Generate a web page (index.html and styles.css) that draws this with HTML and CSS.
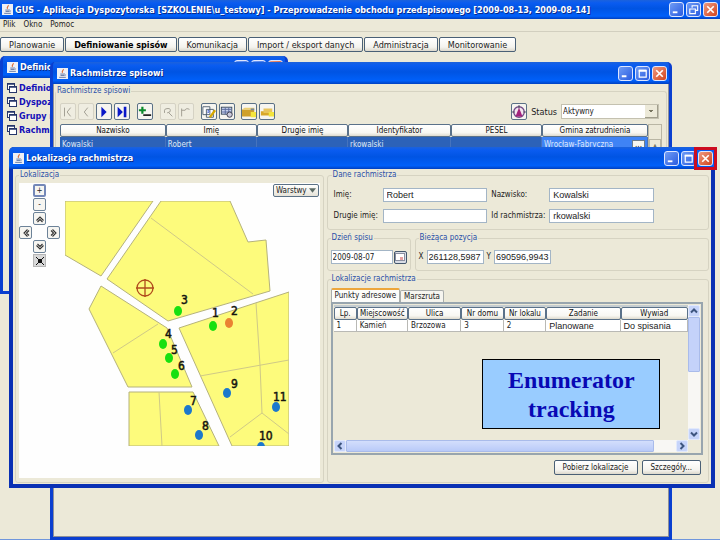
FILE: index.html
```html
<!DOCTYPE html>
<html lang="pl">

<head>
  <meta charset="UTF-8">
  <meta name="viewport" content="width=device-width, initial-scale=1.0">
  <title>GUS - Aplikacja Dyspozytorska</title>
  <link rel="stylesheet" href="styles.css">
</head>

<body>
  <svg class="sprite" aria-hidden="true">
    <symbol id="java" viewBox="0 0 10 10">
      <rect width="10" height="10" fill="#eef0f6" />
      <path d="M5.6 1c.8 1.2-1.8 1.8-.6 3.4" stroke="#d9662c" fill="none" />
      <path d="M3 5.5h4M3.2 6.8h3.4M2 8.5h6M7 5.5q1.4.6 0 1.6" stroke="#5a6f9c" fill="none" stroke-width=".8" />
    </symbol>
    <symbol id="min" viewBox="0 0 14 14"><path d="M3 10h5" stroke="#fff" stroke-width="2" /></symbol>
    <symbol id="max" viewBox="0 0 14 14"><path d="M3 3.5h8M3.5 3v8h7.500V3" stroke="#fff" fill="none" stroke-width="1.300" /><path d="M3 4h8" stroke="#fff" stroke-width="2" /></symbol>
    <symbol id="restore" viewBox="0 0 14 14"><path d="M5.500 5V3h6v5h-2M3 6.500h6v5H3z" stroke="#fff" fill="none" stroke-width="1.200" /></symbol>
    <symbol id="close" viewBox="0 0 14 14"><path d="M3.500 3.500l7 7M10.500 3.500l-7 7" stroke="#fff" stroke-width="1.800" /></symbol>
    <symbol id="form" viewBox="0 0 10 10">
      <rect x=".5" y=".5" width="7" height="6" fill="#fff" stroke="#26366b" />
      <rect x="2.500" y="3.500" width="7" height="6" fill="#fff" stroke="#26366b" />
      <path d="M0 1h8M2 4h8" stroke="#26366b" stroke-width="1.500" />
    </symbol>
    <symbol id="chevron" viewBox="0 0 10 10"><path d="M1.500 6.500L5 3l3.500 3.500M2.500 8L5 5.500 7.500 8" stroke="#333" fill="none" stroke-width="1.100" /></symbol>
    <symbol id="arrow" viewBox="0 0 10 10"><path d="M2 6.500l3-3 3 3" stroke="#3d557f" fill="none" stroke-width="2" /></symbol>
  </svg>

  <header class="titlebar app-title">
    <svg class="java"><use href="#java" /></svg>
    <h1>GUS - Aplikacja Dyspozytorska [SZKOLENIE\u_testowy] - Przeprowadzenie obchodu przedspisowego [2009-08-13, 2009-08-14]</h1>
    <button class="caption" aria-label="Minimalizuj"><svg><use href="#min" /></svg></button>
    <button class="caption" aria-label="Przywróć"><svg><use href="#restore" /></svg></button>
    <button class="caption close" aria-label="Zamknij"><svg><use href="#close" /></svg></button>
  </header>

  <nav class="menu">
    <a href="#">Plik</a>
    <a href="#">Okno</a>
    <a href="#">Pomoc</a>
  </nav>

  <div class="modules">
    <button class="btn">Planowanie</button>
    <button class="btn active">Definiowanie spisów</button>
    <button class="btn">Komunikacja</button>
    <button class="btn">Import / eksport danych</button>
    <button class="btn">Administracja</button>
    <button class="btn">Monitorowanie</button>
  </div>

  <main class="desktop">
    <section class="window win-menu">
      <div class="titlebar">
        <svg class="java"><use href="#java" /></svg>
        <h2>Definiowanie spisów</h2>
        <button class="caption" aria-label="Minimalizuj"><svg><use href="#min" /></svg></button>
        <button class="caption" aria-label="Maksymalizuj"><svg><use href="#max" /></svg></button>
        <button class="caption close" aria-label="Zamknij"><svg><use href="#close" /></svg></button>
      </div>
      <div class="window-body links">
        <a href="#"><svg><use href="#form" /></svg>Definiowanie</a>
        <a href="#"><svg><use href="#form" /></svg>Dyspozytorzy</a>
        <a href="#"><svg><use href="#form" /></svg>Grupy robocze</a>
        <a href="#"><svg><use href="#form" /></svg>Rachmistrze</a>
      </div>
    </section>

    <section class="window win-list">
      <div class="titlebar">
        <svg class="java"><use href="#java" /></svg>
        <h2>Rachmistrze spisowi</h2>
        <button class="caption" aria-label="Minimalizuj"><svg><use href="#min" /></svg></button>
        <button class="caption" aria-label="Maksymalizuj"><svg><use href="#max" /></svg></button>
        <button class="caption close" aria-label="Zamknij"><svg><use href="#close" /></svg></button>
      </div>
      <div class="window-body sunken">
        <fieldset class="list-group">
          <legend>Rachmistrze spisowi</legend>
          <div class="tools">
            <button class="tool off" aria-label="Pierwszy"><svg viewBox="0 0 16 16"><path d="M4 3v10M11 3L7 8l4 5" /></svg></button>
            <button class="tool off" aria-label="Poprzedni"><svg viewBox="0 0 16 16"><path d="M10 3L6 8l4 5" /></svg></button>
            <button class="tool nav" aria-label="Następny"><svg viewBox="0 0 16 16"><path d="M5 2l6 6-6 6z" /></svg></button>
            <button class="tool nav" aria-label="Ostatni"><svg viewBox="0 0 16 16"><path d="M3 2l6 6-6 6zM10 2h3v12h-3z" /></svg></button>
            <span class="space"></span>
            <button class="tool" aria-label="Dodaj"><svg viewBox="0 0 16 16"><path d="M5 2v8M1 6h8" stroke="#0a8a2a" stroke-width="2.500" /><path d="M6 11.500h9" stroke="#222" stroke-width="2" /></svg></button>
            <span class="space"></span>
            <button class="tool off" aria-label="Szukaj"><svg viewBox="0 0 16 16"><path d="M4 9V6q0-2 4-2t2 4l-3 1M9 9l4 4" /></svg></button>
            <button class="tool off" aria-label="Cofnij"><svg viewBox="0 0 16 16"><path d="M3 4v9M3 6h4q1-3 5-1" /></svg></button>
            <span class="space"></span>
            <button class="tool" aria-label="Edytuj"><svg viewBox="0 0 16 16"><path d="M1 2h8v9H1zM5 5h8v9H5z" fill="#fff" stroke="#456" /><path d="M9 14l6-8" stroke="#d6a800" stroke-width="2.500" /><path d="M6 7q2-2 2 0t-2 2" stroke="#24c" fill="none" /></svg></button>
            <button class="tool" aria-label="Raport"><svg viewBox="0 0 16 16"><rect x="1.500" y="2.500" width="12" height="8" fill="#c6d0ec" stroke="#345" /><path d="M2 5h11M2 8h11M6 3v8M10 3v8" stroke="#569" /><circle cx="11" cy="11" r="3" fill="#ccd" stroke="#334" /></svg></button>
            <span class="space thin"></span>
            <button class="tool" aria-label="Paczka"><svg viewBox="0 0 16 16"><path d="M0 5h14v8H0z" fill="#cfa02c" /><path d="M0 5l3-2h11v2z" fill="#edcf72" /><path d="M10 8h6v6h-6z" fill="#f4e53c" /><path d="M10 4h4v2h-4z" fill="#789" /></svg></button>
            <button class="tool" aria-label="Wyślij"><svg viewBox="0 0 16 16"><path d="M1 7h10v5H1z" fill="#d9a828" /><path d="M4 4h10v5H4z" fill="#e8c45c" /><path d="M10 8h6v5h-6z" fill="#f4e53c" /></svg></button>
            <span class="fill"></span>
            <button class="tool" aria-label="Lokalizacja"><svg viewBox="0 0 16 16"><circle cx="8" cy="8" r="6" fill="#f3e6ef" stroke="#704a86" stroke-width="1.500" /><path d="M8 0v4M0 8h3M13 8h3" stroke="#445" /><path d="M8 3l2 5 2 5H4l2-5z" fill="#a4237c" /></svg></button>
            <label for="status">Status</label>
            <select id="status">
              <option>Aktywny</option>
            </select>
          </div>
          <div class="people-wrap">
            <table class="grid people">
              <colgroup><col class="p-last"><col class="p-name"><col class="p-name"><col class="p-id"><col class="p-name"><col></colgroup>
              <thead>
                <tr><th>Nazwisko</th><th>Imię</th><th>Drugie imię</th><th>Identyfikator</th><th>PESEL</th><th>Gmina zatrudnienia</th></tr>
              </thead>
              <tbody>
                <tr><td>Kowalski</td><td>Robert</td><td></td><td>rkowalski</td><td></td><td class="focus">Wrocław-Fabryczna<button aria-label="Wybierz">...</button></td></tr>
              </tbody>
            </table>
            <div class="gutter"><button class="gray-arrow" aria-label="W górę">▲</button></div>
          </div>
        </fieldset>
      </div>
    </section>

    <section class="window win-map">
      <div class="titlebar">
        <svg class="java"><use href="#java" /></svg>
        <h2>Lokalizacja rachmistrza</h2>
        <button class="caption" aria-label="Minimalizuj"><svg><use href="#min" /></svg></button>
        <button class="caption" aria-label="Maksymalizuj"><svg><use href="#max" /></svg></button>
        <button class="caption close marked" aria-label="Zamknij"><svg><use href="#close" /></svg></button>
      </div>
      <div class="window-body split">
        <fieldset class="map-group">
          <legend>Lokalizacja</legend>
          <div class="canvas">
            <div class="pan">
              <button class="zoom-in" aria-label="Powiększ">+</button>
              <button class="zoom-out" aria-label="Pomniejsz">-</button>
              <button class="up" aria-label="W górę"><svg><use href="#chevron" /></svg></button>
              <button class="left" aria-label="W lewo"><svg><use href="#chevron" /></svg></button>
              <button class="right" aria-label="W prawo"><svg><use href="#chevron" /></svg></button>
              <button class="down" aria-label="W dół"><svg><use href="#chevron" /></svg></button>
              <button class="fit" aria-label="Dopasuj"><svg viewBox="0 0 10 10"><path d="M3 3h4v4H3z" fill="#111" /><path d="M1 1l8 8M9 1L1 9" stroke="#111" /></svg></button>
            </div>
            <svg class="map" viewBox="65 201 224 245">
              <g class="land">
                <path d="M65 201h88L101 276 65 255z" />
                <path d="M161 201h69l18 41 18-2 4 51-102 30-61-42z" />
                <path d="M101 286l66 42 25 59h-64L89 309z" />
                <path d="M179 328l110-36v154h-57z" />
                <path d="M129 392h64l26 54h-90z" />
              </g>
              <g class="parcel">
                <path d="M151 218l102 76M113 353l45-29M256 303l4 62 2 48 27 21M262 413l-32 24M200 376l89-16M159 392l3 54" />
              </g>
              <g class="cross">
                <circle cx="145" cy="288" r="8" />
                <path d="M145 279v18M136 288h18" />
              </g>
              <g class="done">
                <ellipse cx="178" cy="311" rx="4" ry="5" />
                <ellipse cx="213" cy="326" rx="4" ry="5" />
                <ellipse cx="163" cy="344" rx="4" ry="5" />
                <ellipse cx="169" cy="358" rx="4" ry="5" />
                <ellipse cx="175" cy="374" rx="4" ry="5" />
              </g>
              <ellipse class="current" cx="229" cy="323" rx="4" ry="5" />
              <g class="todo">
                <ellipse cx="188" cy="410" rx="4" ry="5" />
                <ellipse cx="199" cy="435" rx="4" ry="5" />
                <ellipse cx="227" cy="393" rx="4" ry="5" />
                <ellipse cx="276" cy="407" rx="4" ry="5" />
                <ellipse cx="261" cy="447" rx="4" ry="5" />
              </g>
              <g class="numbers">
                <text x="181" y="304">3</text>
                <text x="212" y="317">1</text>
                <text x="231" y="315">2</text>
                <text x="165" y="338">4</text>
                <text x="171" y="354">5</text>
                <text x="178" y="370">6</text>
                <text x="190" y="405">7</text>
                <text x="202" y="430">8</text>
                <text x="231" y="388">9</text>
                <text x="273" y="401">11</text>
                <text x="259" y="440">10</text>
              </g>
            </svg>
            <button class="layers">Warstwy <svg viewBox="0 0 8 5"><path d="M0 0h8L4 5z" fill="#5c6b66" /></svg></button>
          </div>
        </fieldset>

        <div class="details">
          <fieldset>
            <legend>Dane rachmistrza</legend>
            <div class="person">
              <label for="imie">Imię:</label><input id="imie" value="Robert">
              <label for="nazwisko">Nazwisko:</label><input id="nazwisko" value="Kowalski">
              <label for="drugie">Drugie imię:</label><input id="drugie" value="">
              <label for="idr">Id rachmistrza:</label><input id="idr" value="rkowalski">
            </div>
          </fieldset>
          <div class="pair">
            <fieldset class="day">
              <legend>Dzień spisu</legend>
              <div class="row">
                <input class="date" aria-label="Dzień spisu" value="2009-08-07">
                <button class="calendar" aria-label="Kalendarz"><svg viewBox="0 0 10 8"><rect x=".5" y=".5" width="9" height="7" fill="#fff" stroke="#8a8fa0" /><path d="M5 4h3v3H5z" fill="#e7a0a0" /></svg></button>
              </div>
            </fieldset>
            <fieldset class="position">
              <legend>Bieżąca pozycja</legend>
              <div class="row">
                <label for="px">X</label><input id="px" value="261128,5987">
                <label for="py">Y</label><input id="py" value="690596,9943">
              </div>
            </fieldset>
          </div>
          <fieldset class="places">
            <legend>Lokalizacje rachmistrza</legend>
            <div class="tabs">
              <button class="tab selected">Punkty adresowe</button>
              <button class="tab">Marszruta</button>
            </div>
            <div class="scrollpane">
              <div class="view">
                <table class="grid points">
                  <colgroup><col class="c-lp"><col class="c-town"><col class="c-street"><col class="c-house"><col class="c-house"><col class="c-task"><col></colgroup>
                  <thead>
                    <tr><th>Lp.</th><th>Miejscowość</th><th>Ulica</th><th>Nr domu</th><th>Nr lokalu</th><th>Zadanie</th><th>Wywiad</th></tr>
                  </thead>
                  <tbody>
                    <tr><td>1</td><td>Kamień</td><td>Brzozowa</td><td>3</td><td>2</td><td class="big">Planowane</td><td class="big">Do spisania</td></tr>
                  </tbody>
                </table>
              </div>
              <div class="vbar">
                <button aria-label="W górę"><svg><use href="#arrow" /></svg></button>
                <span class="thumb"></span>
                <button class="down" aria-label="W dół"><svg><use href="#arrow" /></svg></button>
              </div>
              <div class="hbar">
                <button class="left" aria-label="W lewo"><svg><use href="#arrow" /></svg></button>
                <span class="thumb"></span>
                <button class="right" aria-label="W prawo"><svg><use href="#arrow" /></svg></button>
              </div>
            </div>
            <div class="actions">
              <button class="btn">Pobierz lokalizacje</button>
              <button class="btn">Szczegóły...</button>
            </div>
          </fieldset>
        </div>
      </div>
    </section>

    <aside class="callout">Enumerator tracking</aside>
  </main>
</body>

</html>
```

FILE: styles.css
```css
* {
  box-sizing: border-box;
}

body {
  margin: 0;
  height: 100vh;
  display: flex;
  flex-direction: column;
  overflow: hidden;
  background: #ece9d8;
  color: #222;
  font: 8px/10px "DejaVu Sans Condensed", "DejaVu Sans", sans-serif;
}

button,
input,
select {
  margin: 0;
  padding: 0;
  font: inherit;
  color: inherit;
}

button svg {
  display: block;
}

a {
  color: inherit;
  text-decoration: none;
}

.sprite {
  display: none;
}

/* title bars */
.titlebar {
  display: flex;
  align-items: center;
  gap: 2px;
  height: 22px;
  padding: 0 2px 0 4px;
  flex: none;
  color: #fff;
  background: linear-gradient(#1c62dc, #0a5cf0 15%, #0054e3 45%, #0060fa 85%, #0040c0);
}

.titlebar h1,
.titlebar h2 {
  flex: 1;
  min-width: 0;
  overflow: hidden;
  margin: 0;
  font-size: 9px;
  line-height: 14px;
  white-space: nowrap;
  text-shadow: 1px 1px #0a2a8a;
}

.app-title {
  height: 19px;
  padding: 0 2px;
}

.java {
  width: 11px;
  height: 11px;
  flex: none;
}

.caption {
  position: relative;
  width: 15px;
  height: 15px;
  flex: none;
  border: 1px solid #dde6ff;
  border-radius: 3px;
  background: linear-gradient(135deg, #6f9cf5, #2a5ce0);
}

.caption svg {
  width: 13px;
  height: 13px;
}

.caption.close {
  background: linear-gradient(135deg, #ee9a80, #d2431c);
}

/* red frame around the close button */
.caption.marked::after {
  content: "";
  position: absolute;
  inset: -5px;
  border: 3px solid #cc0c20;
}

/* main menu and module buttons */
.menu {
  display: flex;
  gap: 8px;
  height: 13px;
  padding: 1px 3px;
  border-bottom: 1px solid #d2cfbf;
}

.modules {
  display: flex;
  gap: 1px;
  padding: 5px 0 3px;
}

.btn {
  height: 15px;
  padding: 0 8px;
  border: 1px solid #4a6076;
  border-radius: 2px;
  background: linear-gradient(#fff, #f4f3ee 70%, #dcd8cc);
  line-height: 12px;
  white-space: nowrap;
}

.modules .btn {
  font-size: 9px;
}

.modules .active {
  font-weight: bold;
  color: #000;
}

/* desktop with free windows */
.desktop {
  position: relative;
  flex: 1;
  border-bottom: 1px solid #6f96dc;
}

.window {
  position: absolute;
  display: flex;
  flex-direction: column;
  border: 3px solid #0a3fd0;
  border-top: 0;
  border-radius: 5px 5px 0 0;
  background: #0a3fd0;
  overflow: hidden;
}

.window-body {
  flex: 1;
  min-height: 0;
  background: #ece9d8;
}

.win-menu {
  top: 1px;
  left: 0;
  width: 40%;
  height: 238px;
}

.win-list {
  top: 7px;
  left: 50px;
  right: 48px;
  bottom: -1px;
}

.win-map {
  top: 92px;
  left: 9px;
  right: 5px;
  bottom: 51px;
  border: 4px solid #0930b4;
  border-top: 0;
  overflow: visible;
}

.win-map .titlebar {
  margin: 0 -4px;
  border-radius: 5px 5px 0 0;
}

.links {
  padding: 3px 4px;
}

.links a {
  display: flex;
  align-items: center;
  gap: 2px;
  height: 14px;
  font-size: 9px;
  font-weight: bold;
  color: #1410b8;
}

.links svg {
  width: 10px;
  height: 10px;
}

/* groups */
fieldset {
  margin: 0;
  min-width: 0;
  padding: 4px;
  border: 1px solid #d6d3c2;
  border-radius: 3px;
}

legend {
  height: 8px;
  padding: 0 1px;
  line-height: 8px;
  color: #2a50a8;
}

.sunken {
  padding: 3px 1px;
  border: 1px solid #8e9099;
  border-top: 0;
}

.list-group {
  border-bottom: 0;
}

.list-group legend {
  margin-left: -4px;
}

/* list window */
.tools {
  display: flex;
  align-items: center;
  gap: 2px;
  padding: 4px 3px 4px 0;
}

.tool {
  width: 16px;
  height: 17px;
  border: 1px solid #5b7186;
  border-radius: 2px;
  background: #f6f5f0;
}

.tool svg {
  width: 14px;
  height: 14px;
  fill: none;
}

.tool.off {
  border-color: #d5d2c4;
  background: #efede1;
}

.tool.off svg {
  stroke: #99968a;
}

.tool.nav svg {
  fill: #0a18c8;
}

.space {
  width: 3px;
}

.space.thin {
  width: 2px;
}

.fill {
  flex: 1;
}

.tools label {
  padding: 0 2px;
  font-size: 9px;
}

.tools select {
  width: 98px;
  height: 15px;
  padding: 0 1px;
  appearance: none;
  border: 1px solid #c4c1b0;
  border-radius: 0;
  background-color: #fff;
  background-image:
    conic-gradient(from -45deg at 50% 100%, #77745f 90deg, transparent 0),
    linear-gradient(#ece9d8, #ece9d8),
    linear-gradient(#a19e8c, #a19e8c);
  background-position: right 4px center, right 1px top 0, right 0 top 0;
  background-size: 6px 3px, 12px 12px, 13px 13px;
  background-repeat: no-repeat;
}

.people-wrap {
  display: flex;
}

.grid {
  flex: 1;
  width: 100%;
  table-layout: fixed;
  border-collapse: separate;
  border-spacing: 0;
}

.grid th {
  height: 13px;
  padding: 0;
  border: 1px solid #5a7189;
  border-radius: 2px;
  background: linear-gradient(#fff, #f8f7f2 70%, #dedacd);
  font-weight: normal;
  line-height: 10px;
  color: #111;
  white-space: nowrap;
}

.grid td {
  height: 12px;
  padding: 0 2px;
  line-height: 10px;
  white-space: nowrap;
}

.p-last { width: 18%; }
.p-name { width: 15.5%; }
.p-id { width: 17.5%; }

.people td {
  border-right: 1px solid #4673bd;
  background: #2c62b8;
  color: #dfe9fb;
}

.people td.focus {
  background: #3f83f5;
}

.focus button {
  float: right;
  width: 13px;
  height: 10px;
  border: 1px solid #6c7c8c;
  background: #f6f5f0;
  line-height: 6px;
  color: #111;
}

.gutter {
  width: 14px;
  padding-top: 14px;
  border: 1px solid #b9b6a4;
}

.gray-arrow {
  width: 12px;
  height: 12px;
  border: 1px solid #b9b6a4;
  background: #ece9d8;
  font-size: 5px;
  color: #77745f;
}

/* map window */
.split {
  display: flex;
  gap: 3px;
  padding: 2px 2px 1px;
}

.map-group {
  flex: 305;
  display: flex;
  padding: 4px 3px;
}

.canvas {
  position: relative;
  flex: 1;
  display: flex;
  align-items: flex-start;
  gap: 5px;
  background: #fefefe;
}

.pan {
  display: grid;
  grid-template: repeat(6, 13px) / repeat(3, 13px);
  gap: 1px;
  padding-top: 1px;
}

.pan button {
  grid-column: 2;
  display: grid;
  place-items: center;
  border: 1px solid #6c8298;
  border-radius: 2px;
  background: #f6f5f1;
  line-height: 8px;
}

.pan svg {
  width: 10px;
  height: 10px;
}

.pan .zoom-in {
  border: 2px solid #7488b8;
}

.pan .left {
  grid-area: 4 / 1;
}

.pan .right {
  grid-area: 4 / 3;
}

.pan .down {
  grid-area: 5 / 2;
}

.pan .fit {
  grid-area: 6 / 2;
  border-color: #b5b5b5;
  border-radius: 0;
  background: #d8d8d8;
}

.left svg {
  transform: rotate(-90deg);
}

.right svg {
  transform: rotate(90deg);
}

.down svg {
  transform: rotate(180deg);
}

.map {
  width: 224px;
  height: 245px;
  margin-top: 18px;
}

.land {
  fill: #fdfb7c;
  stroke: #b5b27c;
  stroke-width: 1;
}

.parcel {
  fill: none;
  stroke: #cfc987;
}

.cross {
  fill: none;
  stroke: #b04a1c;
  stroke-width: 1.3;
}

.done {
  fill: #18e010;
}

.current {
  fill: #ea8232;
}

.todo {
  fill: #1c78cc;
}

.numbers {
  font: 12px "DejaVu Sans Condensed", "DejaVu Sans", sans-serif;
  fill: #151510;
  stroke: #151510;
  stroke-width: .5;
}

.layers {
  position: absolute;
  top: 1px;
  right: 1px;
  display: flex;
  align-items: center;
  gap: 2px;
  height: 13px;
  padding: 0 2px;
  border: 1px solid #5b7186;
  border-radius: 2px;
  background: linear-gradient(#fff, #e6e3d8);
}

.layers svg {
  width: 7px;
  height: 5px;
}

.details {
  flex: 388;
  min-width: 0;
  display: flex;
  flex-direction: column;
  gap: 4px;
}

input {
  width: 100%;
  min-width: 0;
  height: 14px;
  padding: 0 3px;
  border: 1px solid #a3b5c6;
  border-radius: 0;
  background: #fff;
  font: 9px/12px "Liberation Sans", Arial, sans-serif;
}

.person {
  display: grid;
  grid-template-columns: 46px 1fr 56px 1fr;
  gap: 7px 3px;
  align-items: center;
  padding: 5px 50px 2px 2px;
  white-space: nowrap;
}

.person label:nth-of-type(even) {
  padding-left: 1px;
}

.pair {
  display: flex;
  gap: 4px;
}

.pair fieldset {
  padding: 8px 3px 6px;
}

.day {
  width: 84px;
}

.position {
  flex: 1;
}

.row {
  display: flex;
  align-items: center;
  gap: 3px;
}

.day .row {
  gap: 1px;
}

.row input.date {
  padding: 0 1px;
  font: inherit;
}

.position input {
  width: 57px;
  padding: 0 1px;
}

.calendar {
  flex: none;
  width: 13px;
  height: 13px;
  border: 1px solid #42566c;
  border-radius: 2px;
  background: #d9dde6;
}

.calendar svg {
  width: 10px;
  height: 8px;
}

.places {
  flex: 1;
  display: flex;
  flex-direction: column;
  padding: 5px 5px 7px 3px;
}

.tabs {
  display: flex;
  align-items: flex-end;
}

.tab {
  height: 12px;
  padding: 0 3px;
  border: 1px solid #a9adab;
  border-bottom: 0;
  border-radius: 2px 2px 0 0;
  background: #f6f5ef;
  line-height: 10px;
}

.tab.selected {
  height: 14px;
  border-top: 2px solid #eda63c;
  background: #fcfcfa;
}

.scrollpane {
  flex: 1;
  display: grid;
  grid-template: 1fr 12px / 1fr 12px;
  padding: 1px;
  border: 2px solid #98a5ae;
}

.view {
  min-width: 0;
  border-top: 2px solid #c4ccd0;
}

.points td {
  height: 12px;
  padding: 0 3px;
  border-right: 1px solid #b9b9b5;
  border-bottom: 1px solid #b9b9b5;
  background: #fff;
}

.points td.big {
  font: 9px/10px "Liberation Sans", Arial, sans-serif;
}

.c-lp { width: 6.500%; }
.c-town { width: 14.500%; }
.c-street { width: 15%; }
.c-house { width: 12%; }
.c-task { width: 21%; }

.vbar,
.hbar {
  display: flex;
  justify-content: space-between;
  background: #f8f7f4;
}

.vbar {
  flex-direction: column;
}

.vbar button,
.hbar button {
  width: 12px;
  height: 12px;
  border: 1px solid #e2e9fb;
  border-radius: 2px;
  background: #c6d4fa;
}

.vbar svg,
.hbar svg {
  width: 10px;
  height: 10px;
}

.thumb {
  border: 1px solid #a9bbea;
  border-radius: 1px;
  background: #c4d2fa;
}

.vbar .thumb {
  height: 55px;
  margin-bottom: auto;
}

.hbar .thumb {
  width: 87%;
  margin-right: auto;
  background: linear-gradient(#d3defc, #b9caf8);
}

.actions {
  display: flex;
  justify-content: flex-end;
  gap: 4px;
  padding: 5px 2px 0 0;
}

/* slide note above the windows */
.callout {
  position: absolute;
  left: 67%;
  top: 304px;
  width: 178px;
  padding: 6px 20px 4px;
  border: 1px solid #000;
  background: #99ccff;
  color: #0808b4;
  font: bold 24px/29px "Liberation Serif", "Times New Roman", serif;
  text-align: center;
}
```
